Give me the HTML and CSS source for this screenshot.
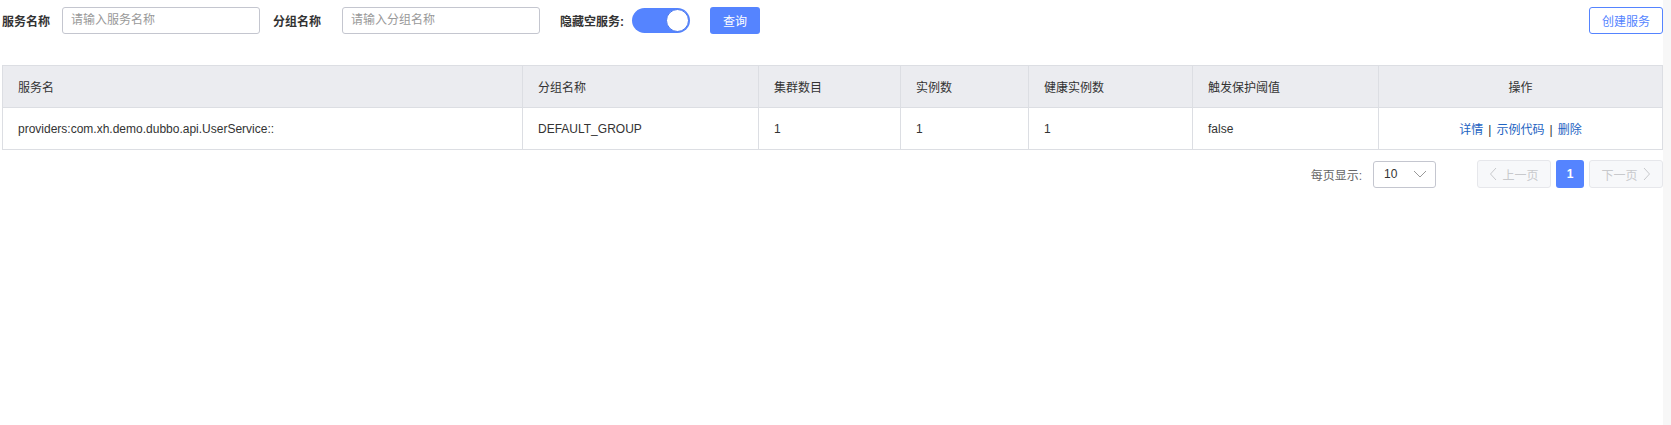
FILE: index.html
```html
<!DOCTYPE html>
<html lang="zh-CN">
  <head>
    <meta charset="UTF-8" />
    <meta name="viewport" content="width=device-width, initial-scale=1.0" />
    <title>服务列表</title>
    <link rel="stylesheet" href="styles.css">
  </head>
  <body>
    <div class="page">
      <div class="main">
        <div class="search-bar">
          <div class="form-item">
            <span class="form-label">服务名称</span>
            <input type="text" class="text-input" placeholder="请输入服务名称" />
          </div>
          <div class="form-item item-group">
            <span class="form-label">分组名称</span>
            <input type="text" class="text-input" placeholder="请输入分组名称" />
          </div>
          <div class="form-item item-hidden">
            <span class="form-label">隐藏空服务:</span>
            <span class="switch"><span class="switch-knob"></span></span>
          </div>
          <button class="btn btn-primary">查询</button>
          <button class="btn btn-normal btn-create">创建服务</button>
        </div>

        <table class="service-table">
          <colgroup>
            <col style="width: 520px" />
            <col style="width: 236px" />
            <col style="width: 142px" />
            <col style="width: 128px" />
            <col style="width: 164px" />
            <col style="width: 186px" />
            <col />
          </colgroup>
          <thead>
            <tr>
              <th>服务名</th>
              <th>分组名称</th>
              <th>集群数目</th>
              <th>实例数</th>
              <th>健康实例数</th>
              <th>触发保护阈值</th>
              <th class="center">操作</th>
            </tr>
          </thead>
          <tbody>
            <tr>
              <td>providers:com.xh.demo.dubbo.api.UserService::</td>
              <td>DEFAULT_GROUP</td>
              <td>1</td>
              <td>1</td>
              <td>1</td>
              <td>false</td>
              <td class="center">
                <a class="link">详情</a><span class="sep">|</span><a class="link">示例代码</a><span class="sep">|</span><a class="link">删除</a>
              </td>
            </tr>
          </tbody>
        </table>

        <div class="pagination">
          <span class="page-size-label">每页显示:</span>
          <div class="page-select">
            <span>10</span>
            <svg class="select-arrow" width="14" height="8" viewBox="0 0 14 8">
              <path d="M1 1 L7 7 L13 1" fill="none" stroke="#999" stroke-width="1" />
            </svg>
          </div>
          <button class="page-btn page-prev" disabled>
            <svg width="8" height="14" viewBox="0 0 8 14">
              <path d="M7 1 L1.5 7 L7 13" fill="none" stroke="#c8c9cc" stroke-width="1" />
            </svg>
            上一页
          </button>
          <button class="page-btn page-current">1</button>
          <button class="page-btn page-next" disabled>
            下一页
            <svg width="8" height="14" viewBox="0 0 8 14">
              <path d="M1 1 L6.5 7 L1 13" fill="none" stroke="#c8c9cc" stroke-width="1" />
            </svg>
          </button>
        </div>
      </div>
      <div class="edge"></div>
    </div>
  </body>
</html>
```

FILE: styles.css
```css
body {
  margin: 0;
  padding: 0;
  font-family: "Liberation Sans", "Noto Sans CJK SC", sans-serif;
  font-size: 12px;
  color: #333;
  background-color: #fff;
}
.page {
  display: flex;
  min-height: 425px;
}
.main {
  flex: 1;
  padding: 6px 0 0 2px;
}
.edge {
  width: 8px;
  background-color: #f7f7f7;
}

.search-bar {
  display: flex;
  align-items: center;
  height: 28px;
}
.form-item {
  display: flex;
  align-items: center;
}
.form-label {
  font-weight: bold;
  color: #333;
  margin-right: 12px;
}
.item-group {
  margin-left: 13px;
}
.item-group .form-label {
  margin-right: 21px;
}
.item-hidden {
  margin-left: 20px;
}
.item-hidden .form-label {
  margin-right: 8px;
}
.text-input {
  box-sizing: border-box;
  width: 198px;
  height: 27px;
  padding: 0 8px;
  border: 1px solid #c4c6cf;
  border-radius: 3px;
  font-family: inherit;
  font-size: 12px;
  color: #333;
  outline: none;
}
.text-input::placeholder {
  color: #999;
}
.switch {
  position: relative;
  display: inline-block;
  width: 58px;
  height: 25px;
  border-radius: 13px;
  background-color: #5584ff;
}
.switch-knob {
  position: absolute;
  top: 1px;
  right: 1px;
  width: 21px;
  height: 21px;
  border-radius: 50%;
  background-color: #fff;
  border: 1px solid #4a78ee;
}
.btn {
  box-sizing: border-box;
  height: 27px;
  padding: 0 12px;
  border-radius: 3px;
  font-family: inherit;
  font-size: 12px;
  cursor: pointer;
}
.btn-primary {
  margin-left: 20px;
  width: 50px;
  border: none;
  background-color: #5584ff;
  color: #fff;
}
.btn-normal {
  border: 1px solid #5584ff;
  background-color: #fff;
  color: #5584ff;
}
.btn-create {
  margin-left: auto;
  width: 74px;
  padding: 0;
}

.service-table {
  margin-top: 31px;
  width: 1661px;
  border-collapse: collapse;
  table-layout: fixed;
}
.service-table th,
.service-table td {
  height: 42px;
  padding: 0 15px;
  border: 1px solid #dcdee3;
  text-align: left;
  font-weight: normal;
  color: #333;
  box-sizing: border-box;
}
.service-table th {
  background-color: #ebecf0;
}
.service-table .center {
  text-align: center;
}
.link {
  color: #1d63c2;
  cursor: pointer;
}
.sep {
  color: #333;
  margin: 0 5px;
}

.pagination {
  display: flex;
  align-items: center;
  justify-content: flex-end;
  margin-top: 10px;
  width: 1661px;
}
.page-size-label {
  color: #666;
  margin-right: 11px;
}
.page-select {
  box-sizing: border-box;
  display: flex;
  align-items: center;
  justify-content: space-between;
  width: 63px;
  height: 27px;
  padding: 0 8px 0 10px;
  border: 1px solid #c4c6cf;
  border-radius: 3px;
  color: #333;
  margin-right: 41px;
}
.page-btn {
  box-sizing: border-box;
  display: flex;
  align-items: center;
  justify-content: center;
  height: 28px;
  border-radius: 3px;
  font-family: inherit;
  font-size: 12px;
  padding: 0;
}
.page-prev,
.page-next {
  width: 74px;
  gap: 5px;
  background-color: #f7f8fa;
  border: 1px solid #e6e7eb;
  color: #c8c9cc;
}
.page-current {
  width: 28px;
  margin: 0 5px;
  border: none;
  background-color: #5584ff;
  color: #fff;
  font-weight: bold;
}
```
